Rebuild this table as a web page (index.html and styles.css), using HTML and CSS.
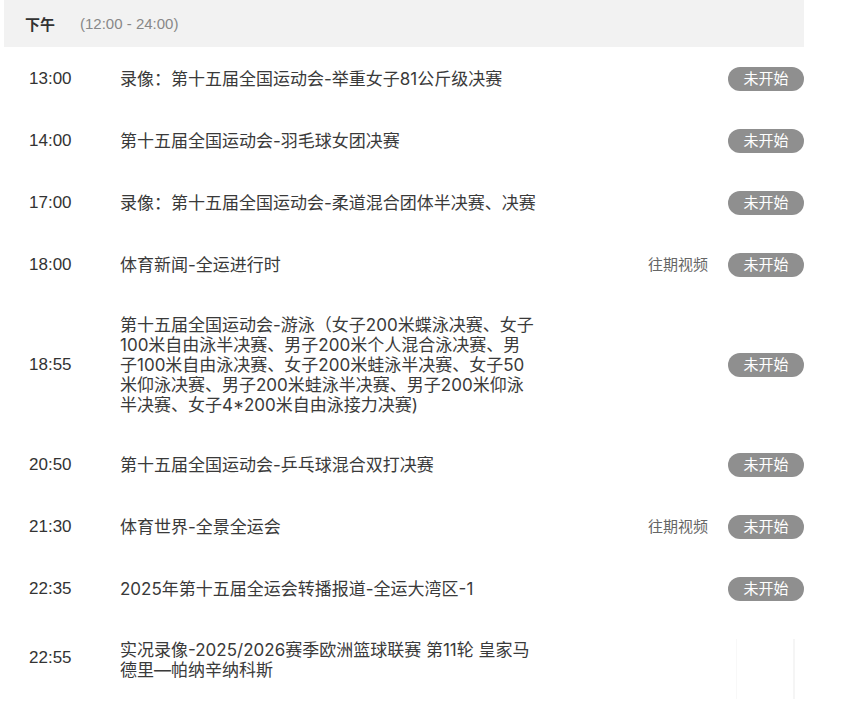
FILE: index.html
```html
<!DOCTYPE html>
<html>

<head>
    <meta charset="UTF-8">
    <title>节目单</title>
    <link rel="stylesheet" href="styles.css">
</head>

<body>
    <div class="schedule">
        <!-- Period header -->
        <div class="period">
            <span class="period-name">下午</span>
            <span class="period-range">(12:00 - 24:00)</span>
        </div>

        <!-- Programme rows -->
        <div class="row">
            <div class="time">13:00</div>
            <div class="title">录像：第十五届全国运动会-举重女子81公斤级决赛</div>
            <div class="status">未开始</div>
        </div>
        <div class="row">
            <div class="time">14:00</div>
            <div class="title">第十五届全国运动会-羽毛球女团决赛</div>
            <div class="status">未开始</div>
        </div>
        <div class="row">
            <div class="time">17:00</div>
            <div class="title">录像：第十五届全国运动会-柔道混合团体半决赛、决赛</div>
            <div class="status">未开始</div>
        </div>
        <div class="row">
            <div class="time">18:00</div>
            <div class="title">体育新闻-全运进行时</div>
            <a class="replay">往期视频</a>
            <div class="status">未开始</div>
        </div>
        <div class="row">
            <div class="time">18:55</div>
            <div class="title">第十五届全国运动会-游泳（女子200米蝶泳决赛、女子100米自由泳半决赛、男子200米个人混合泳决赛、男子100米自由泳决赛、女子200米蛙泳半决赛、女子50米仰泳决赛、男子200米蛙泳半决赛、男子200米仰泳半决赛、女子4*200米自由泳接力决赛)</div>
            <div class="status">未开始</div>
        </div>
        <div class="row">
            <div class="time">20:50</div>
            <div class="title">第十五届全国运动会-乒乓球混合双打决赛</div>
            <div class="status">未开始</div>
        </div>
        <div class="row">
            <div class="time">21:30</div>
            <div class="title">体育世界-全景全运会</div>
            <a class="replay">往期视频</a>
            <div class="status">未开始</div>
        </div>
        <div class="row">
            <div class="time">22:35</div>
            <div class="title">2025年第十五届全运会转播报道-全运大湾区-1</div>
            <div class="status">未开始</div>
        </div>
        <div class="row row-live">
            <div class="time">22:55</div>
            <div class="title">实况录像-2025/2026赛季欧洲篮球联赛 第11轮 皇家马德里—帕纳辛纳科斯</div>
            <div class="placeholder"></div>
        </div>
    </div>
</body>

</html>
```

FILE: styles.css
```css
body {
    margin: 0;
    background-color: #fff;
    font-family: "Liberation Sans", "Noto Sans CJK SC", sans-serif;
    color: #333;
}

.schedule {
    width: 800px;
    margin-left: 4px;
}

.period {
    display: flex;
    align-items: center;
    height: 47px;
    padding-left: 21px;
    background-color: #f2f2f2;
    font-size: 15px;
}

.period-name {
    font-weight: bold;
    color: #333;
}

.period-range {
    margin-left: 25px;
    color: #888;
}

.row {
    display: flex;
    align-items: center;
    padding: 20px 0 18px 25px;
    min-height: 24px;
    font-size: 17px;
    line-height: 20px;
}

.time {
    width: 91px;
    flex-shrink: 0;
}

.title {
    width: 416px;
    flex-shrink: 0;
    font-family: "Inter", "Noto Sans CJK SC", sans-serif;
    color: #3a3a3a;
}

.replay {
    margin-left: auto;
    font-size: 15px;
    color: #666;
    cursor: pointer;
}

.status {
    margin-left: auto;
    width: 76px;
    height: 24px;
    line-height: 24px;
    border-radius: 12px;
    background-color: #8f8f8f;
    color: #fff;
    font-size: 15px;
    text-align: center;
}

.replay + .status {
    margin-left: 20px;
}

/* last row: text sits high, faint image box on the right */
.row-live {
    align-items: flex-start;
}

.row-live .title {
    margin-top: 1px;
}

.row-live .time {
    line-height: 38px;
}

.placeholder {
    margin-left: auto;
    margin-right: 9px;
    width: 56px;
    height: 60px;
    border-left: 1px solid #f8f8f8;
    border-right: 2px solid #f5f5f5;
}
```
